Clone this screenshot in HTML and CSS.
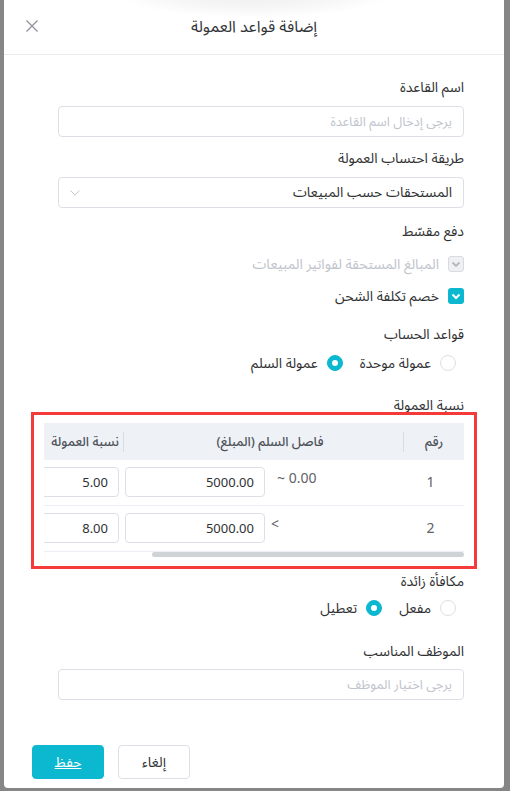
FILE: index.html
```html
<!DOCTYPE html>
<html lang="ar" dir="rtl">
<head>
<meta charset="utf-8">
<title>إضافة قواعد العمولة</title>
<link rel="stylesheet" href="styles.css">
</head>
<body>
<div class="dialog">
  <header class="dlg-header">
    <span class="hdr-side"></span>
    <h2 class="dlg-title">إضافة قواعد العمولة</h2>
    <button class="close-btn" type="button" aria-label="close">
      <svg width="12" height="12" viewBox="0 0 12 12"><path d="M0.5 0.5 L11.5 11.5 M11.5 0.5 L0.5 11.5" stroke="#8c8f96" stroke-width="1.2" fill="none"/></svg>
    </button>
  </header>

  <div class="dlg-body">
    <div class="label l1">اسم القاعدة</div>
    <div class="input placeholder">يرجى إدخال اسم القاعدة</div>

    <div class="label l2">طريقة احتساب العمولة</div>
    <div class="input select">
      <span>المستحقات حسب المبيعات</span>
      <svg class="chev" width="10" height="6" viewBox="0 0 10 6"><path d="M0.5 0.5 L5 5.2 L9.5 0.5" stroke="#c0c4cc" stroke-width="1" fill="none"/></svg>
    </div>

    <div class="label l3">دفع مقسّط</div>
    <div class="check-list">
      <div class="check-row disabled">
        <span class="cbox cbox-disabled"><svg width="16" height="16" viewBox="0 0 16 16"><path d="M4.5 6.5 L8 10 L11.5 6.5" stroke="#b4b8bf" stroke-width="1.8" fill="none"/></svg></span>
        <span class="check-text">المبالغ المستحقة لفواتير المبيعات</span>
      </div>
      <div class="check-row">
        <span class="cbox cbox-on"><svg width="16" height="16" viewBox="0 0 16 16"><path d="M4.5 6.5 L8 10 L11.5 6.5" stroke="#ffffff" stroke-width="2" fill="none"/></svg></span>
        <span class="check-text">خصم تكلفة الشحن</span>
      </div>
    </div>

    <div class="label l4">قواعد الحساب</div>
    <div class="radio-group">
      <label class="radio-item"><span class="radio"></span><span>عمولة موحدة</span></label>
      <label class="radio-item"><span class="radio radio-on"></span><span>عمولة السلم</span></label>
    </div>

    <div class="label l5">نسبة العمولة</div>
    <div class="table-wrap">
      <div class="table">
        <div class="tr thead">
          <div class="td c-no">رقم</div>
          <div class="td c-range sep">فاصل السلم (المبلغ)</div>
          <div class="td c-rate sep">نسبة العمولة</div>
        </div>
        <div class="tr">
          <div class="td c-no">1</div>
          <div class="td c-range">
            <div class="num-input wide">5000.00</div>
            <span class="range-from first">~ 0.00</span>
          </div>
          <div class="td c-rate"><div class="num-input">5.00</div></div>
        </div>
        <div class="tr">
          <div class="td c-no">2</div>
          <div class="td c-range">
            <div class="num-input wide">5000.00</div>
            <span class="range-from">&lt;</span>
          </div>
          <div class="td c-rate"><div class="num-input">8.00</div></div>
        </div>
      </div>
    </div>
    <div class="hscroll"><div class="hthumb"></div></div>

    <div class="label l6">مكافأة زائدة</div>
    <div class="radio-group">
      <label class="radio-item"><span class="radio"></span><span>مفعل</span></label>
      <label class="radio-item"><span class="radio radio-on"></span><span>تعطيل</span></label>
    </div>

    <div class="label l7">الموظف المناسب</div>
    <div class="input placeholder">يرجى اختيار الموظف</div>
  </div>

  <footer class="dlg-footer">
    <button class="btn btn-cancel" type="button">إلغاء</button>
    <button class="btn btn-save" type="button">حفظ</button>
  </footer>

  <div class="annot"></div>
</div>
</body>
</html>
```

FILE: styles.css
```css
* { box-sizing: border-box; }

html, body {
  margin: 0;
  padding: 0;
  height: 791px;
  overflow: hidden;
}

body {
  background: #868686;
  font-family: "Noto Sans Arabic", "Noto Sans", "DejaVu Sans", sans-serif;
  font-size: 14px;
  color: #303133;
}

.dialog {
  position: relative;
  width: 500px;
  margin-left: 4px;
  margin-right: 6px;
  background: #ffffff;
  border-radius: 0 0 4px 4px;
  height: 788px;
  overflow: hidden;
}

.dialog::before {
  content: "";
  position: absolute;
  left: 110px;
  top: -30px;
  width: 280px;
  height: 48px;
  background: radial-gradient(ellipse at center, rgba(0,0,0,0.07) 0%, rgba(0,0,0,0.03) 45%, rgba(0,0,0,0) 70%);
  pointer-events: none;
}

/* header */
.dlg-header {
  height: 55px;
  border-bottom: 1px solid #e8eaed;
  display: grid;
  grid-template-columns: 1fr auto 1fr;
  align-items: center;
}

.dlg-title {
  margin: 0;
  font-size: 16px;
  font-weight: 400;
  color: #333539;
  line-height: 22px;
  letter-spacing: 0.2px;
}

.close-btn {
  justify-self: end;
  margin-left: 22px;
  width: 12px;
  height: 12px;
  padding: 0;
  border: 0;
  background: transparent;
  display: flex;
  margin-bottom: 2px;
}

/* body */
.dlg-body {
  padding: 0 40px;
}

.label {
  line-height: 22px;
  font-size: 14px;
  color: #303133;
}

.l1 { margin-top: 22px; }
.l2 { margin-top: 11px; }
.l3 { margin-top: 13px; }
.l4 { margin-top: 12px; }
.l5 { margin-top: 21px; }
.l6 { margin-top: 14px; }
.l7 { margin-top: 22px; }

.input {
  margin-top: 7px;
  margin-left: 14px;
  height: 31px;
  border: 1px solid #dcdfe6;
  border-radius: 4px;
  padding: 0 11px;
  display: flex;
  align-items: center;
  font-size: 14px;
  color: #303133;
}

.l7 + .input { margin-top: 6px; }

.placeholder { color: #c0c4cc; font-size: 13px; }

.select { justify-content: space-between; }
.chev { display: block; }

/* checkboxes */
.check-list {
  margin-top: 5px;
}

.check-row {
  height: 32px;
  display: flex;
  align-items: center;
  gap: 9px;
}

.cbox {
  width: 16px;
  height: 16px;
  border-radius: 3px;
  display: flex;
}

.cbox-disabled {
  background: #eef0f3;
  border: 1px solid #d8dbe0;
}
.cbox-disabled svg { margin: -1px; }

.cbox-on {
  background: #0bb8d0;
}

.check-row.disabled .check-text { color: #c0c4cc; }

/* radios */
.radio-group {
  margin-top: 6px;
  height: 22px;
  display: flex;
  align-items: center;
  padding-right: 8px;
  gap: 17px;
}

.l6 + .radio-group { margin-top: 4px; }

.radio-item {
  display: flex;
  align-items: center;
  gap: 9px;
  color: #303133;
  font-size: 14px;
}

.radio {
  width: 16px;
  height: 16px;
  border-radius: 50%;
  border: 1px solid #dcdfe6;
  background: #fff;
  display: flex;
  align-items: center;
  justify-content: center;
}

.radio-on {
  background: #0bb8d0;
  border-color: #0bb8d0;
}
.radio-on::after {
  content: "";
  width: 6px;
  height: 6px;
  border-radius: 50%;
  background: #fff;
}

/* table */
.table-wrap {
  margin-top: 6px;
  width: 420px;
  overflow: hidden;
}

.table {
  width: 565px;
}

.tr {
  display: flex;
  height: 46px;
  border-bottom: 1px solid #ebeef5;
  color: #606266;
}

.thead {
  height: 37px;
  border-bottom: 0;
  background: #eef1f6;
  font-size: 13px;
  font-weight: 500;
  color: #4f535b;
}

.td {
  display: flex;
  align-items: center;
}

.c-no {
  width: 60px;
  justify-content: center;
  font-size: 14px;
  padding-right: 7px;
}
.thead .c-no { font-size: 13px; padding-right: 0; }

.c-range {
  width: 280px;
  justify-content: center;
  padding-left: 12px;
}

.c-rate {
  width: 225px;
  justify-content: flex-start;
  padding-right: 5px;
}

.sep {
  background: linear-gradient(#d9dde4, #d9dde4) right center / 1px 20px no-repeat;
}

.tr:not(.thead) .c-range {
  direction: ltr;
  justify-content: flex-start;
  align-items: flex-start;
  padding-top: 7px;
  padding-left: 1px;
}

.tr:not(.thead) .c-rate {
  align-items: flex-start;
  padding-top: 7px;
}

.num-input {
  width: 100px;
  height: 30px;
  border: 1px solid #dcdfe6;
  border-radius: 4px;
  direction: ltr;
  text-align: right;
  padding: 0 10px;
  line-height: 28px;
  font-family: "Noto Sans", "Open Sans", sans-serif;
  font-size: 13px;
  color: #303133;
  background: #fff;
}

.num-input.wide { width: 140px; }

.range-from {
  margin-left: 6px;
  line-height: 22px;
  font-family: "Noto Sans", "Open Sans", sans-serif;
  font-size: 14px;
  color: #606266;
}

.range-from.first { margin-left: 12px; }

.hscroll {
  width: 420px;
  height: 5px;
}

.hthumb {
  width: 312px;
  height: 5px;
  border-radius: 3px;
  background: #cfd3d6;
}

/* footer */
.dlg-footer {
  margin-top: 45px;
  padding-left: 28px;
  display: flex;
  justify-content: flex-end;
  gap: 14px;
}

.btn {
  width: 72px;
  height: 34px;
  border-radius: 4px;
  font-family: inherit;
  font-size: 14px;
  cursor: pointer;
  padding: 0;
}

.btn-cancel {
  background: #fff;
  border: 1px solid #dcdfe6;
  color: #303133;
}

.btn-save {
  background: #0bb8d0;
  border: 1px solid #0bb8d0;
  color: #fff;
  text-decoration: underline;
}

/* red annotation frame drawn over the table */
.annot {
  position: absolute;
  left: 27px;
  top: 412px;
  width: 446px;
  height: 157px;
  border: 3px solid #f53a3a;
  pointer-events: none;
}
```
